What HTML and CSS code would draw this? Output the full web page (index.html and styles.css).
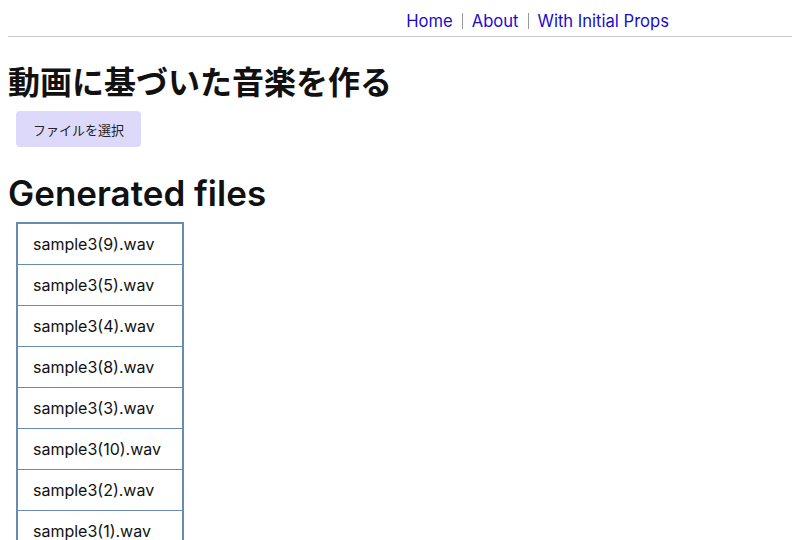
FILE: index.html
```html
<!DOCTYPE html>
<html lang="ja">
<head>
<meta charset="utf-8">
<link rel="stylesheet" href="styles.css">
</head>
<body>
<nav class="nav">
  <a href="#" class="nav-link">Home</a>
  <span class="sep"></span>
  <a href="#" class="nav-link">About</a>
  <span class="sep"></span>
  <a href="#" class="nav-link">With Initial Props</a>
</nav>
<main class="main">
  <h1 class="title">動画に基づいた音楽を作る</h1>
  <button class="file-btn">ファイルを選択</button>
  <h2 class="subtitle">Generated files</h2>
  <table class="files">
    <tbody>
      <tr><td>sample3(9).wav</td></tr>
      <tr><td>sample3(5).wav</td></tr>
      <tr><td>sample3(4).wav</td></tr>
      <tr><td>sample3(8).wav</td></tr>
      <tr><td>sample3(3).wav</td></tr>
      <tr><td>sample3(10).wav</td></tr>
      <tr><td>sample3(2).wav</td></tr>
      <tr><td>sample3(1).wav</td></tr>
    </tbody>
  </table>
</main>
</body>
</html>
```
FILE: styles.css
```css
body {
  margin: 0 8px;
  font-family: "Inter", "Noto Sans CJK JP", sans-serif;
  color: #111;
  background: #fff;
}
.nav {
  display: flex;
  justify-content: flex-end;
  align-items: center;
  gap: 9px;
  height: 37px;
  padding-top: 6px;
  box-sizing: border-box;
  padding-right: 123px;
  border-bottom: 1px solid #c8c8c8;
}
.nav-link {
  color: #1a0dcc;
  text-decoration: none;
  font-size: 16.6px;
}
.sep {
  width: 1px;
  height: 16px;
  background: #999;
}
.main {
  display: flex;
  flex-direction: column;
  align-items: flex-start;
}
.title {
  font-family: "Noto Sans CJK JP", sans-serif;
  font-size: 32px;
  font-weight: 700;
  margin: 20px 0 8px;
  line-height: 46px;
}
.file-btn {
  margin-left: 8px;
  background: #dcd9fb;
  border: none;
  border-radius: 4px;
  height: 36px;
  padding: 0 17px;
  font-family: "Noto Sans CJK JP", sans-serif;
  font-size: 13px;
  color: #222;
}
.subtitle {
  font-size: 35px;
  font-weight: 600;
  line-height: 44px;
  margin: 24px 0 7px;
}
.files {
  margin-left: 8px;
  border-collapse: collapse;
  border: 2px solid #6a8bb0;
  width: 168px;
}
.files td {
  border-top: 1px solid #6a8bb0;
  height: 40px;
  padding: 0 15px;
  font-size: 16px;
  white-space: nowrap;
}
```
